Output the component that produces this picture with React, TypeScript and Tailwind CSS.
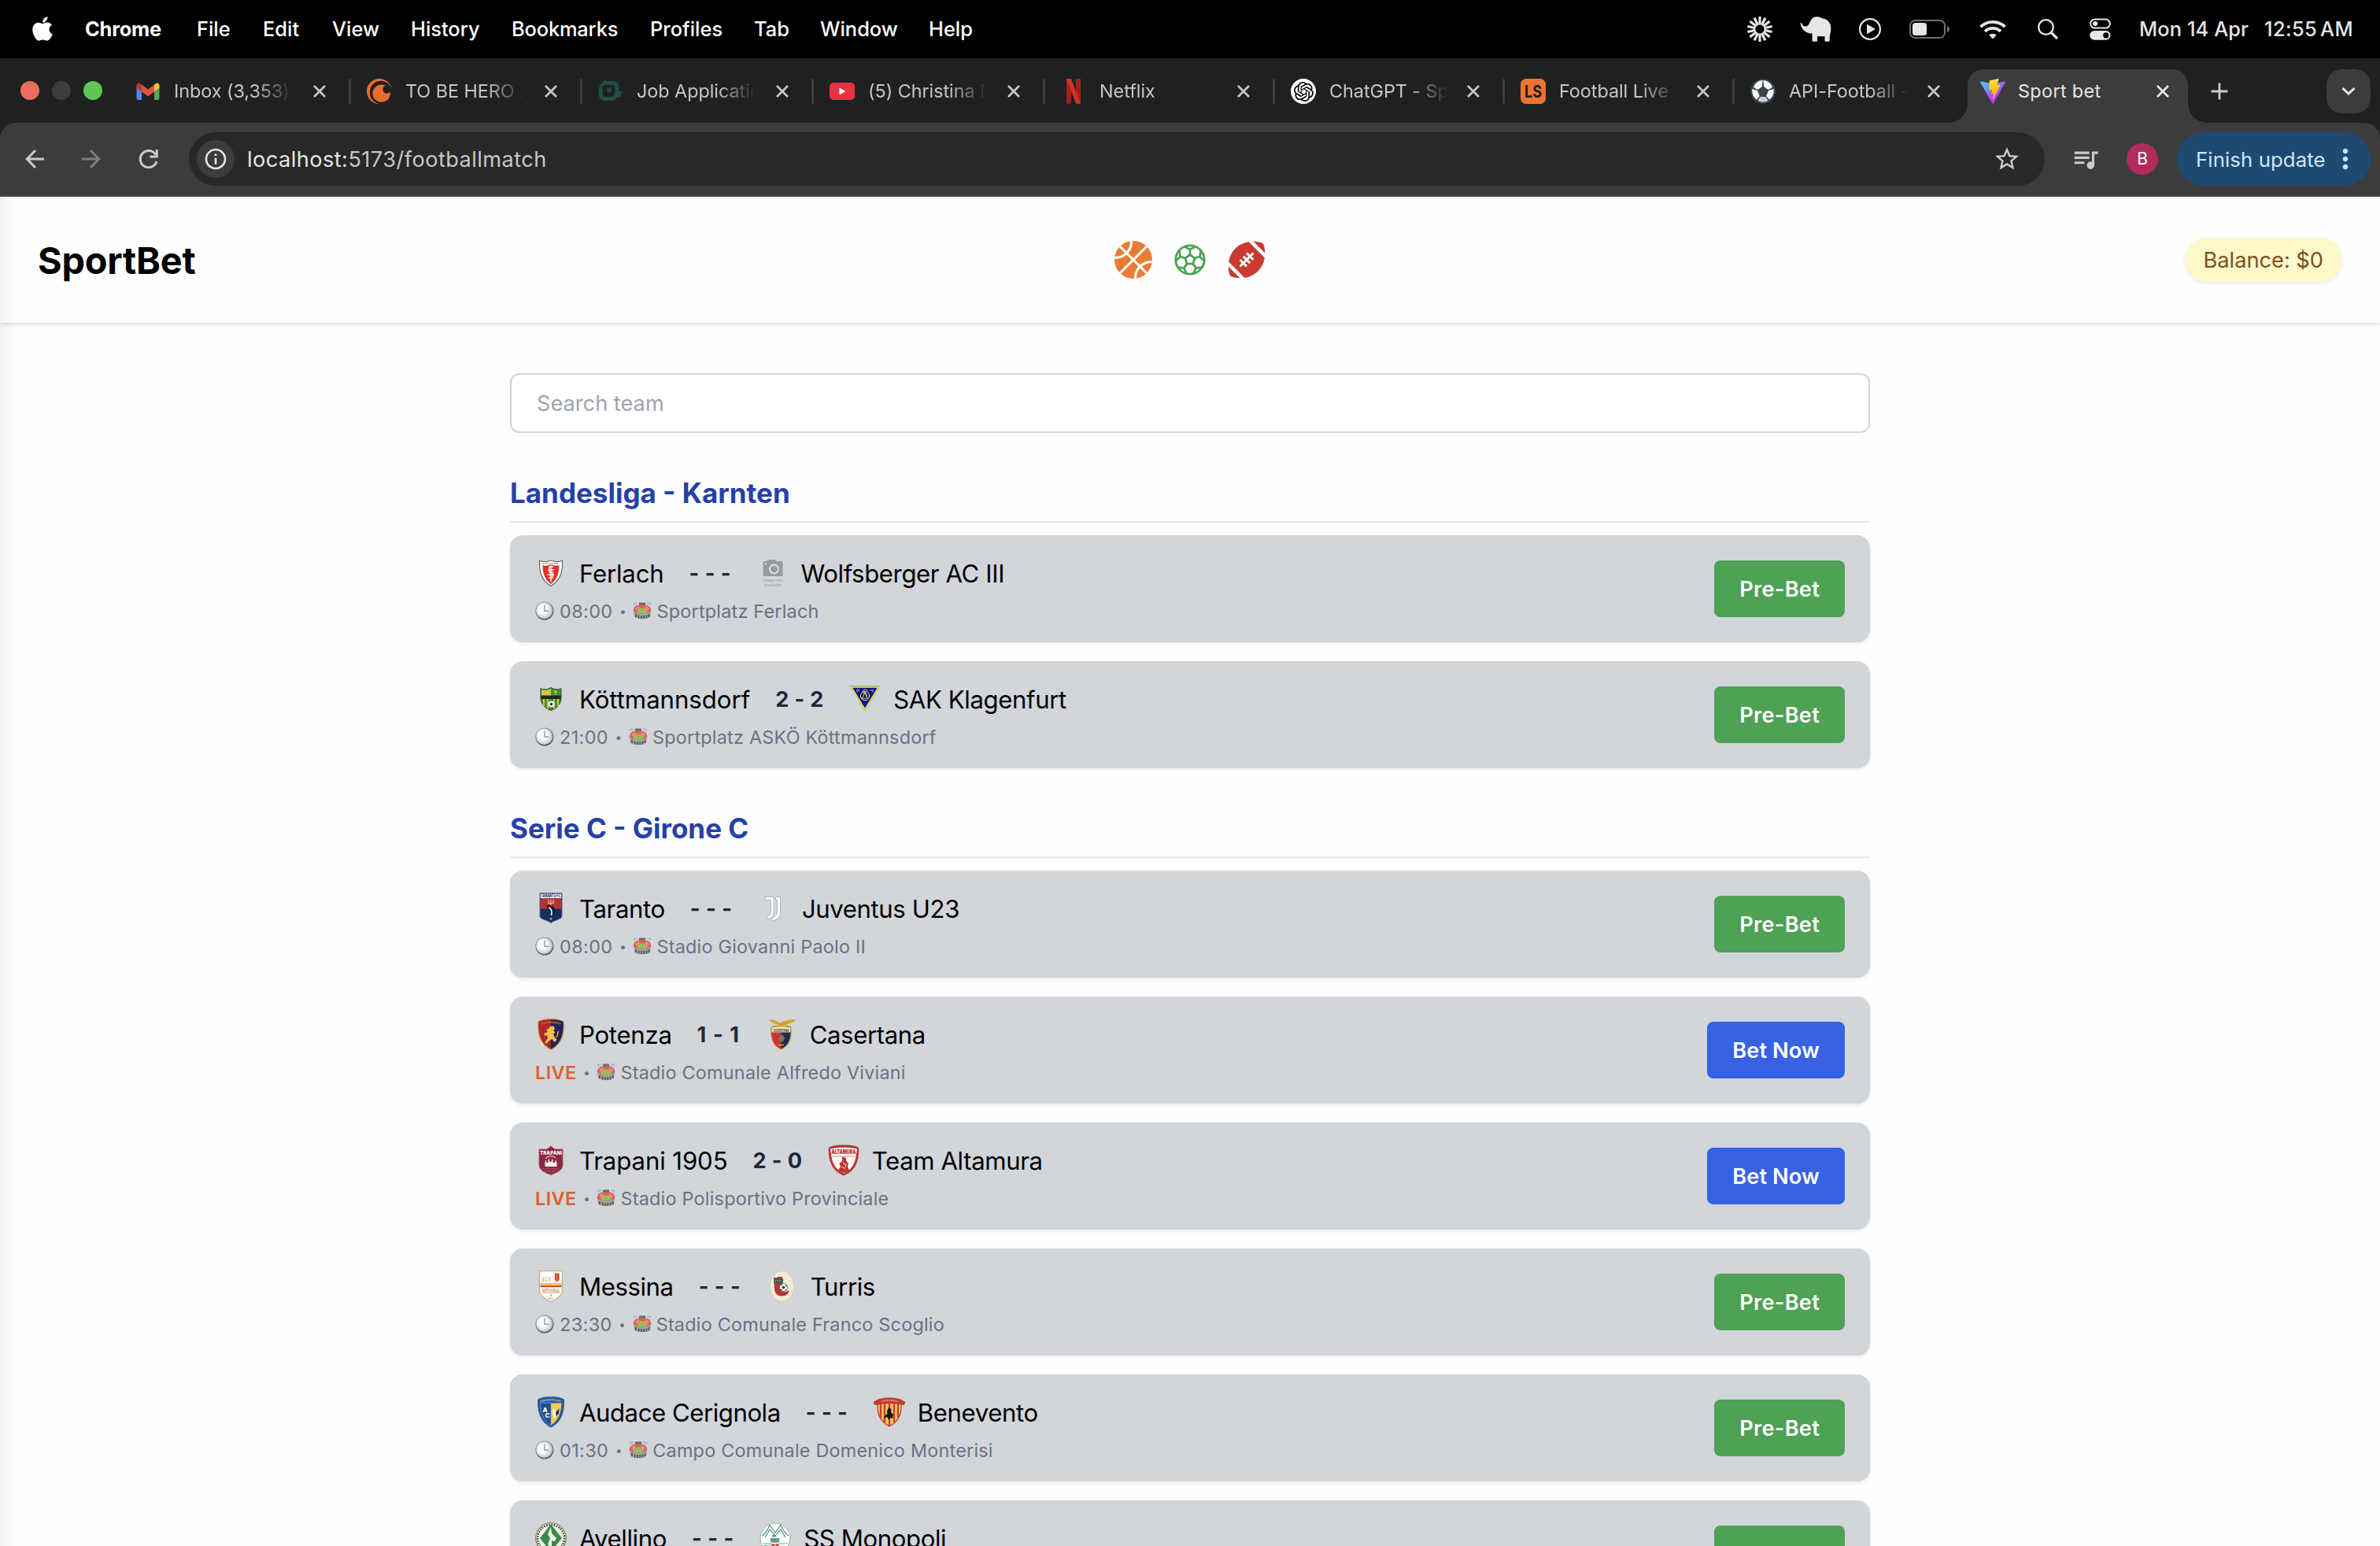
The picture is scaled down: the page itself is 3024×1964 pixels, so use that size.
import type { ReactNode } from "react";
import { FaApple, FaFootballBall } from "react-icons/fa";
import { SiCrunchyroll, SiOpenai } from "react-icons/si";
import { MdInfoOutline, MdMoreVert, MdQueueMusic, MdStarBorder } from "react-icons/md";

/* ---------- macOS menu bar ---------- */

const menuItems = [
  { label: "Chrome", cls: "w-[142px] font-bold tracking-[-0.2px]" },
  { label: "File", cls: "w-[84px]" },
  { label: "Edit", cls: "w-[88px]" },
  { label: "View", cls: "w-[100px]" },
  { label: "History", cls: "w-[128px]" },
  { label: "Bookmarks", cls: "w-[176px] tracking-[-0.15px]" },
  { label: "Profiles", cls: "w-[132px]" },
  { label: "Tab", cls: "w-[84px]" },
  { label: "Window", cls: "w-[138px]" },
  { label: "Help", cls: "w-[80px]" },
];

function Starburst() {
  return (
    <svg className="h-8 w-8" viewBox="0 0 32 32" stroke="#e6e6e6" strokeWidth="3.2">
      {Array.from({ length: 14 }, (_, i) => (
        <line key={i} x1="16" y1="0" x2="16" y2="10.5" transform={`rotate(${(i * 360) / 14} 16 16)`} />
      ))}
    </svg>
  );
}

function MenuBar() {
  return (
    <div className="flex h-[74px] items-center bg-black pl-[41px] text-[25.4px] font-medium text-white">
      <FaApple className="mr-[41px] h-[35px] w-[26px] shrink-0 -translate-y-px" />
      {menuItems.map((m) => (
        <div key={m.label} className={"shrink-0 whitespace-nowrap " + m.cls}>
          {m.label}
        </div>
      ))}
      <div className="ml-auto flex items-center pr-[32px] text-[#e6e6e6]">
        <Starburst />
        <svg className="ml-[35px] h-8 w-10" viewBox="0 0 40 32" fill="#e6e6e6">
          <path d="M0.6 8.2C1.5 7.6 2.6 8.3 2.8 9.6C3.3 12 5.5 12.6 7.6 12.4C10.5 12.1 11.5 9.5 13 6.5C14.5 3 17 0.3 21.5 0.3C25 0.3 27 1.5 28.5 2.6C34.5 3 39 7.5 39.3 14C39.5 19 38.7 20.5 38 24L37.6 30.5C37.5 31.5 37 31.8 36.3 31.8H32.8C32 31.8 31.5 31.3 31.5 30.5V25.3H22V30.5C22 31.3 21.5 31.8 20.7 31.8H17C16.2 31.8 15.7 31.3 15.6 30.5L15.5 21.5C12.5 21.5 9 21 6 18.5C3 16 1 12.5 0.6 8.2Z" />
        </svg>
        <svg className="ml-[35px] h-7 w-7" viewBox="0 0 28 28">
          <circle cx="14" cy="14" r="12.9" fill="none" stroke="#e6e6e6" strokeWidth="2.2" />
          <path d="M10 8.8V19.2C10 19.9 10.6 20.1 11.1 19.8L19.8 14.7C20.4 14.3 20.4 13.7 19.8 13.3L11.1 8.2C10.6 7.9 10 8.2 10 8.8Z" fill="#e6e6e6" />
        </svg>
        <svg className="ml-[36px] h-6 w-[51px]" viewBox="0 0 51 24">
          <rect x="1" y="1" width="44" height="22" rx="6.5" fill="none" stroke="#6f6f6f" strokeWidth="2" />
          <rect x="4" y="4" width="18" height="16" rx="3.5" fill="#e6e6e6" />
          <path d="M48 8C50 9 51 10.4 51 12C51 13.6 50 15 48 16Z" fill="#6f6f6f" />
        </svg>
        <svg className="ml-[38px] h-[26px] w-[34px]" viewBox="0 0 34 26" fill="none" stroke="#e6e6e6" strokeWidth="3.8">
          <path d="M1.5 10.2A22 22 0 0 1 32.5 10.2" />
          <path d="M7 15.9A14.5 14.5 0 0 1 27 15.9" />
          <path d="M17 25.5L12.3 20.6A6.8 6.8 0 0 1 21.7 20.6Z" fill="#e6e6e6" stroke="none" />
        </svg>
        <svg className="ml-[40px] h-[26px] w-[26px]" viewBox="0 0 26 26" fill="none" stroke="#e6e6e6">
          <circle cx="10.5" cy="10.5" r="9.3" strokeWidth="2.3" />
          <path d="M17.3 17.3L24 24" strokeWidth="3.2" strokeLinecap="round" />
        </svg>
        <svg className="ml-[40px] h-7 w-[27px]" viewBox="0 0 27 28">
          <rect x="1.1" y="1.6" width="24.8" height="11" rx="5.5" fill="none" stroke="#e6e6e6" strokeWidth="2" />
          <circle cx="7.2" cy="7.1" r="3" fill="#e6e6e6" />
          <rect x="0.2" y="16" width="26.4" height="11.8" rx="5.9" fill="#e6e6e6" />
          <circle cx="20.8" cy="21.9" r="3.6" fill="#000" />
        </svg>
        <div className="ml-[36px] w-[159px] whitespace-nowrap tracking-[0.1px]">Mon 14 Apr</div>
        <div className="w-[115px] whitespace-nowrap tracking-[0.35px]">
          12:55<span className="ml-[4px]">AM</span>
        </div>
      </div>
    </div>
  );
}

/* ---------- Tab strip ---------- */

function CloseX({ className }: { className: string }) {
  return (
    <svg className={"h-4 w-4 shrink-0 " + className} viewBox="0 0 16 16" stroke="currentColor" strokeWidth="2.8">
      <path d="M1 1L15 15M15 1L1 15" />
    </svg>
  );
}

const Gmail = () => (
  <svg className="h-8 w-8" viewBox="0 0 32 32">
    <path d="M1.5 9V25C1.5 26 2.3 27 3.5 27H8V13Z" fill="#4f86ee" />
    <path d="M30.5 9V25C30.5 26 29.7 27 28.5 27H24V13Z" fill="#53a65a" />
    <path d="M24 7.5L26 6C28 4.5 30.5 6 30.5 8.5V11.5L24 16.5Z" fill="#f2bd42" />
    <path d="M8 7.5L6 6C4 4.5 1.5 6 1.5 8.5V11.5L8 16.5Z" fill="#b9362c" />
    <path d="M8 7.5L16 13.5L24 7.5V16.5L16 22.5L8 16.5Z" fill="#dd5144" />
  </svg>
);

const JobIcon = () => (
  <svg className="h-8 w-8" viewBox="0 0 32 32" fill="none" stroke="#1f4d49" strokeWidth="5">
    <path d="M7 5.5H19C22 5.5 24 7.5 24 11V17C24 21 21.5 24.5 17 25.5H9C5 25.5 3 22.5 3 19V11" />
    <path d="M2.5 10L11 3" strokeWidth="4" />
    <circle cx="14" cy="14.5" r="3" fill="#1f4d49" stroke="none" />
    <path d="M22 15L32 17L28 19.5L30 23H20Z" fill="#1f4d49" stroke="none" />
  </svg>
);

const YouTube = () => (
  <svg className="h-8 w-8" viewBox="0 0 32 32">
    <rect x="0" y="5" width="32" height="22" rx="5" fill="#ea3340" />
    <path d="M12.5 11.5L20.5 16L12.5 20.5Z" fill="#fff" />
  </svg>
);

const NetflixN = () => (
  <svg className="h-8 w-8" viewBox="0 0 32 32">
    <path d="M7 0H13V31.5L7 32Z" fill="#a3201c" />
    <path d="M19 0H25V32L19 31.5Z" fill="#a3201c" />
    <path d="M7 0H13L25 32L19 31.3Z" fill="#d3302a" />
  </svg>
);

const ChatGPT = () => (
  <div className="flex h-8 w-8 items-center justify-center rounded-full bg-white text-black">
    <SiOpenai className="h-[25px] w-[25px]" />
  </div>
);

const LiveScore = () => (
  <svg className="h-8 w-8" viewBox="0 0 32 32">
    <rect width="32" height="32" rx="7" fill="#ed742e" />
    <text x="16" y="24" textAnchor="middle" fontFamily="Inter, sans-serif" fontSize="22" fontWeight="700" fill="#1c1c1c" textLength="22" lengthAdjust="spacingAndGlyphs">
      LS
    </text>
  </svg>
);

const ApiBall = () => (
  <svg className="h-8 w-8" viewBox="0 0 32 32">
    <circle cx="16" cy="16" r="15.8" fill="#39434b" />
    <path d="M15.5 2L14.8 10L9.5 14L4 11C6 5.5 10 2.5 15.5 2Z" fill="#fff" />
    <path d="M16.5 2L17.2 10L22.5 14L28 11C26 5.5 22 2.5 16.5 2Z" fill="#fff" />
    <path d="M2.5 13L9 15L11.8 22L8 26.5C3.5 23.5 1.5 18 2.5 13Z" fill="#f6f6f6" />
    <path d="M29.5 13L23 15L20.2 22L24 26.5C28.5 23.5 30.5 18 29.5 13Z" fill="#f6f6f6" />
    <path d="M12.5 23H19.5L22.5 27.5C19 30.5 13 30.5 9.5 27.5Z" fill="#c3ced6" />
  </svg>
);

const ViteLogo = () => (
  <svg className="h-8 w-8" viewBox="0 0 256 257">
    <defs>
      <linearGradient id="viteA" x1="-.828%" x2="57.636%" y1="7.652%" y2="78.411%">
        <stop offset="0%" stopColor="#41D1FF" />
        <stop offset="100%" stopColor="#BD34FE" />
      </linearGradient>
      <linearGradient id="viteB" x1="43.376%" x2="50.316%" y1="2.242%" y2="89.03%">
        <stop offset="0%" stopColor="#FFEA83" />
        <stop offset="8.333%" stopColor="#FFDD35" />
        <stop offset="100%" stopColor="#FFA800" />
      </linearGradient>
    </defs>
    <path fill="url(#viteA)" d="M255.153 37.938L134.897 252.976c-2.483 4.440-8.862 4.466-11.382.048L.875 37.958c-2.746-4.814 1.371-10.646 6.827-9.670l120.385 21.517a6.537 6.537 0 0 0 2.322-.004l117.867-21.483c5.438-.991 9.574 4.796 6.877 9.620Z" />
    <path fill="url(#viteB)" d="M185.432.063L96.440 17.501a3.268 3.268 0 0 0-2.634 3.014l-5.474 92.456a3.268 3.268 0 0 0 3.997 3.378l24.777-5.718c2.318-.535 4.413 1.507 3.936 3.838l-7.361 36.047c-.495 2.426 1.782 4.500 4.151 3.780l15.304-4.649c2.372-.720 4.652 1.360 4.150 3.788l-11.698 56.621c-.732 3.542 3.979 5.473 5.943 2.437l1.313-2.028l72.516-144.720c1.215-2.423-.880-5.186-3.540-4.672l-25.505 4.922c-2.396.462-4.435-1.770-3.759-4.114l16.646-57.705c.677-2.350-1.370-4.583-3.769-4.113Z" />
  </svg>
);

const tabs: { title: string; icon: ReactNode; width: string }[] = [
  { title: "Inbox (3,353)", icon: <Gmail />, width: "w-[294px]" },
  { title: "TO BE HERO X", icon: <SiCrunchyroll className="h-8 w-8 text-[#ea6c2d]" />, width: "w-[294px]" },
  { title: "Job Application", icon: <JobIcon />, width: "w-[294px]" },
  { title: "(5) Christina P", icon: <YouTube />, width: "w-[294px]" },
  { title: "Netflix", icon: <NetflixN />, width: "w-[292px]" },
  { title: "ChatGPT - Sp", icon: <ChatGPT />, width: "w-[292px]" },
  { title: "Football Live", icon: <LiveScore />, width: "w-[292px]" },
  { title: "API-Football -", icon: <ApiBall />, width: "w-[293px]" },
];

function TabStrip() {
  return (
    <div className="flex h-[82px] bg-[#1f2120] text-[23.4px]">
      <div className="flex w-[150px] shrink-0 gap-4 pl-[26px] pt-[29px]">
        <span className="h-6 w-6 rounded-full bg-[#ec6a5e]" />
        <span className="h-6 w-6 rounded-full bg-[#3c3e3d]" />
        <span className="h-6 w-6 rounded-full bg-[#61c554]" />
      </div>
      {tabs.map((t, i) => (
        <div key={t.title} className={"flex h-[84px] shrink-0 items-center text-[#c4c6c5] " + t.width}>
          <div className="ml-[22px] h-8 w-8 shrink-0">{t.icon}</div>
          <div className="ml-[17px] w-[151px] shrink-0 whitespace-nowrap tracking-[-0.05px] [mask-image:linear-gradient(to_right,black_68%,transparent_100%)]">
            {t.title}
          </div>
          <CloseX className="ml-auto mr-[29px]" />
          <span
            className={
              i < tabs.length - 1
                ? "-mr-[2px] h-8 w-[3px] shrink-0 rounded-full bg-[#3d3f3e]"
                : "-mr-[2px] h-8 w-[3px] shrink-0"
            }
          />
        </div>
      ))}
      <div className="relative ml-[5px] mt-[14px] flex h-[68px] w-[280px] shrink-0 items-center rounded-t-[20px] bg-[#3c3c3c] pb-3 text-[#e6e6e6]">
        <span className="absolute -left-6 bottom-0 h-6 w-6 bg-[radial-gradient(circle_at_0_0,transparent_23.5px,#3c3c3c_24px)]" />
        <span className="absolute -right-6 bottom-0 h-6 w-6 bg-[radial-gradient(circle_at_100%_0,transparent_23.5px,#3c3c3c_24px)]" />
        <div className="ml-4 h-8 w-8 shrink-0">
          <ViteLogo />
        </div>
        <div className="ml-4 whitespace-nowrap tracking-[0.35px]">Sport bet</div>
        <CloseX className="ml-auto mr-6" />
      </div>
      <svg className="ml-[29px] mt-[31px] h-[22px] w-[22px] shrink-0" viewBox="0 0 22 22" stroke="#c9cac9" strokeWidth="2.8">
        <path d="M11 0.5V21.5M0.5 11H21.5" />
      </svg>
      <div className="ml-auto mr-3 mt-[14px] flex h-14 w-14 shrink-0 items-center justify-center rounded-[20px] bg-[#3c3c3c]">
        <svg className="h-[10px] w-[18px]" viewBox="0 0 18 10" fill="none" stroke="#e6e6e6" strokeWidth="3">
          <path d="M1.5 1L9 8L16.5 1" />
        </svg>
      </div>
    </div>
  );
}

/* ---------- Toolbar ---------- */

function Toolbar() {
  return (
    <div className="bg-[#1f2120]">
      <div className="flex h-[94px] items-center rounded-t-[20px] border-b-2 border-[#4a4849] bg-[#3c3c3c] pl-[32px]">
        <svg className="h-6 w-6 shrink-0" viewBox="0 0 24 24" fill="none" stroke="#c9c9c9" strokeWidth="3">
          <path d="M13 1L2.3 12L13 23M2.3 12H24" />
        </svg>
        <svg className="ml-12 h-6 w-6 shrink-0" viewBox="0 0 24 24" fill="none" stroke="#7d7d7d" strokeWidth="3">
          <path d="M11 1L21.7 12L11 23M21.7 12H0" />
        </svg>
        <svg className="ml-12 h-6 w-[25px] shrink-0" viewBox="0 0 25 24" fill="none" stroke="#c9c9c9" strokeWidth="3">
          <path d="M23 15A10.6 10.6 0 1 1 22 6.8" />
          <path d="M23.3 0V9H14.5" />
        </svg>
        <div className="ml-[39px] flex h-[68px] w-[2358px] shrink-0 items-center rounded-full bg-[#282828] pl-[10px]">
          <div className="flex h-12 w-12 items-center justify-center rounded-full bg-[#3c3c3c]">
            <MdInfoOutline className="h-8 w-8 text-[#e3e3e3]" />
          </div>
          <div className="ml-[16px] whitespace-nowrap pt-[2px] text-[27.2px] tracking-[0.44px] text-[#c7c7c7]">
            <span className="text-[#e6e6e6]">localhost:</span>5173/footballmatch
          </div>
          <MdStarBorder className="ml-auto mr-[30px] h-9 w-9 text-[#c9c9c9]" />
        </div>
        <MdQueueMusic className="ml-[33px] h-[38px] w-[38px] shrink-0 text-[#c9c9c9]" />
        <div className="ml-[33px] flex h-10 w-10 shrink-0 items-center justify-center rounded-full bg-[#b02c5c] text-[21px] text-white">B</div>
        <div className="ml-6 flex h-[68px] w-[246px] shrink-0 items-center rounded-full bg-[#1f4972] pl-[24px] text-[25.8px] text-[#cbe6fb]">
          <div className="w-[170px] whitespace-nowrap pt-[2px] tracking-[0.08px]">Finish update</div>
          <MdMoreVert className="h-[40px] w-[40px] shrink-0" />
        </div>
      </div>
    </div>
  );
}

/* ---------- Sport icons ---------- */

const BasketballIcon = () => (
  <svg className="h-12 w-12" viewBox="0 0 48 48">
    <defs>
      <clipPath id="ballClip">
        <circle cx="24" cy="24" r="24" />
      </clipPath>
    </defs>
    <g clipPath="url(#ballClip)">
      <rect width="48" height="48" fill="#e97c35" />
      <g fill="none" stroke="#fefefe" strokeWidth="3.1">
        <path d="M5 5L43 43M43 5L5 43" />
        <circle cx="1" cy="0.8" r="20.6" />
        <circle cx="47" cy="47.2" r="20.6" />
      </g>
    </g>
  </svg>
);

const SoccerIcon = () => (
  <svg className="h-12 w-12" viewBox="0 0 48 48" fill="none" stroke="#4ea155" strokeWidth="2.8">
    <circle cx="24" cy="24" r="18.2" />
    <path d="M24 17.6L30.1 22L27.8 29.2H20.2L17.9 22Z" />
    {[0, 72, 144, 216, 288].map((a) => (
      <path key={a} d="M24 17.6V10.8M16.8 7.3L24 10.8L31.2 7.3" transform={`rotate(${a} 24 24)`} />
    ))}
  </svg>
);

/* ---------- Club crests ---------- */

function Crest({ children }: { children: ReactNode }) {
  return (
    <svg className="h-10 w-10 shrink-0" viewBox="0 0 40 40" fontFamily="Inter, sans-serif">
      {children}
    </svg>
  );
}

const Ferlach = () => (
  <Crest>
    <path d="M5.5 4C10 6.5 15 6 20 4C25 6 30 6.5 34.5 4C35 17 33 29 20 36.5C7 29 5 17 5.5 4Z" fill="#fff" stroke="#666" strokeWidth="1.2" />
    <path d="M9.5 10C14 11.5 17 10 20 9C23 10 26 11.5 30.5 10C30.5 20 28 28 20 34C12 28 9.5 20 9.5 10Z" fill="#e0342b" />
    <path d="M23 12H18V19H22V26H17M16 16H24M15.5 22H24M20 10V31" fill="none" stroke="#fff" strokeWidth="1.4" />
    <path d="M10 7.5H30" stroke="#555" strokeWidth="1.2" strokeDasharray="1 1" />
  </Crest>
);
const NoImage = () => (
  <Crest>
    <path d="M9.5 5H12.5V3.8H15L17 3H23L25 5H31C32 5 32.6 5.6 32.6 6.5V22.5C32.6 23.5 32 24 31 24H9C8 24 7.6 23.5 7.6 22.5V6.5C7.6 5.6 8.3 5 9.5 5Z" fill="#989b9e" />
    <circle cx="21.5" cy="15" r="5.5" fill="#989b9e" stroke="#e4e6e8" strokeWidth="1.8" />
    <circle cx="11" cy="8.3" r="1.1" fill="#e4e6e8" />
    <text x="20" y="31" fontSize="5.2" textAnchor="middle" fill="#a0a3a7">image not</text>
    <text x="20" y="37" fontSize="5.2" textAnchor="middle" fill="#a0a3a7">available</text>
  </Crest>
);
const Kottmannsdorf = () => (
  <Crest>
    <path d="M7 6.5C11 8.5 16 8 20 5.5C24 8 29 8.5 33 6.5C33.5 9 32.5 11 33 14C34 24 30 31 20 34.5C10 31 6 24 7 14C7.5 11 6.5 9 7 6.5Z" fill="#3f8f3a" stroke="#3c4a2a" strokeWidth="1" />
    <path d="M8 8C12 9 16 9 20 7V16H8Z" fill="#d9c63c" />
    <path d="M11 20V29M16 20V32M24 20V32M29 20V29" stroke="#d9c63c" strokeWidth="2" />
    <rect x="7.5" y="15.5" width="25" height="4.5" fill="#1e2a1a" />
    <path d="M24 9L26 12L28 9M26 12V15" stroke="#d9c63c" strokeWidth="1.3" fill="none" />
    <circle cx="20.5" cy="26.5" r="4" fill="#eee" />
    <circle cx="20.5" cy="26.5" r="1.7" fill="#222" />
  </Crest>
);
const Sak = () => (
  <Crest>
    <path d="M0.5 3.2H39.5L20 35.6Z" fill="#8b8d6a" />
    <path d="M2.6 4.8H37.4L20 33.2Z" fill="#14148c" stroke="#e5e04e" strokeWidth="1.8" />
    <circle cx="20" cy="16" r="5.6" fill="none" stroke="#e5e04e" strokeWidth="1" />
    <path d="M23.5 9.5C21 7 16.5 8 17.5 11S23.5 13 22.5 16.5S16 21 14.5 18M16.5 20L20 11L23.5 20" fill="none" stroke="#e5e04e" strokeWidth="1" />
    <path d="M10 8V11M30 8V11M12 8V10M28 8V10" stroke="#e5e04e" strokeWidth="1" />
  </Crest>
);
const Taranto = () => (
  <Crest>
    <path d="M6 0.5H34V30C34 34 24 35 20 38.5C16 35 6 34 6 30Z" fill="#172f5c" stroke="#5d6f92" strokeWidth="1" />
    <rect x="6.8" y="1" width="26.4" height="6" fill="#f0f1f4" />
    <path d="M7 7H33V20.5H7Z" fill="#b8352f" />
    <text x="20" y="6.2" fontSize="5.5" fontWeight="700" textAnchor="middle" fill="#172f5c" textLength="25" lengthAdjust="spacingAndGlyphs">TARANTO FC</text>
    <path d="M17 9V13.5H23V9M20 9V18" fill="none" stroke="#e7b9b5" strokeWidth="1.2" />
    <path d="M14 17C18 14 25 17 25 22C25 26 22 27 21 30C20 26 19 23 16 21Z" fill="#0f1c38" />
    <path d="M17 19C20 20 22 23 20.5 29" fill="none" stroke="#fff" strokeWidth="1.6" />
    <circle cx="20" cy="33" r="1.6" fill="#8a9dc0" />
  </Crest>
);
const Juventus = () => (
  <Crest>
    <path d="M9 5.5H20V24C20 29 17 32 12.5 33.5L11.5 30.5C15 29 16.5 27 16.5 23V9H9Z" fill="#fff" stroke="#a5a7aa" strokeWidth="0.8" />
    <path d="M22.5 5.5H28.5V24C28.5 30.5 25 34.5 18.5 36L17.5 33C22 31 24.5 28.5 24.5 23V9H22.5Z" fill="#fff" stroke="#a5a7aa" strokeWidth="0.8" />
  </Crest>
);
const Potenza = () => (
  <Crest>
    <path d="M20 0.5C27 0.5 32 1.5 36 3.5C37.5 20 33 33 20 39.5C7 33 2.5 20 4 3.5C8 1.5 13 0.5 20 0.5Z" fill="#b2232b" />
    <path d="M20 0.5C27 0.5 32 1.5 36 3.5C37.5 20 33 33 20 39.5Z" fill="#23215e" />
    <path d="M20 0.5C27 0.5 32 1.5 36 3.5C37.5 20 33 33 20 39.5C7 33 2.5 20 4 3.5C8 1.5 13 0.5 20 0.5Z" fill="none" stroke="#d9a23c" strokeWidth="1.2" />
    <path d="M8 6.5C15 4 25 4 32 6.5" fill="none" stroke="#c9683a" strokeWidth="2.5" strokeDasharray="1.5 0.8" />
    <path d="M19 10L23.5 9.5L25 13L23 15L25.5 17.5L23 19.5L25 24L27.5 27L24.5 30L21.5 26L18 28L14 32L12.5 29.5L16 25L15 21L11.5 22L12 18.5L16 17L14 14.5L17 13Z" fill="#f2c14c" />
    <path d="M26.5 24C30 22 27 19 30 16" fill="none" stroke="#f2c14c" strokeWidth="1.3" />
  </Crest>
);
const Casertana = () => (
  <Crest>
    <path d="M7 11C9 9 14 9 19.5 9.5C25 9 30 9 32 11C33 24 31 34 19.5 39.2C8 34 6 24 7 11Z" fill="#1d2a55" stroke="#d7a63e" strokeWidth="1.3" />
    <path d="M7.6 17.5H19.5V38.5C10 34 7.5 27 7.6 17.5Z" fill="#cf3531" />
    <path d="M7.5 11.5C14 9.5 25 9.5 31.5 11.5V17.5H7.5Z" fill="#efe3ae" />
    <text x="19.5" y="16.8" fontSize="5" fontWeight="700" textAnchor="middle" fill="#444" textLength="20" lengthAdjust="spacingAndGlyphs">CASERTANA</text>
    <circle cx="19.5" cy="25" r="4.5" fill="#8d6d5b" stroke="#55433a" strokeWidth="0.8" />
    <path d="M4 1.5C10 1 14 3 18 5.5C24 2 31 1 38 1.2C36 4.5 31 6 26 8L22 10.5H12L17 8C11 7 7 5 4 1.5Z" fill="#cfa22f" />
    <path d="M16 33.5H23" stroke="#d7a63e" strokeWidth="1.5" />
  </Crest>
);
const Trapani = () => (
  <Crest>
    <path d="M20 2L25 6H35V26C35 33 27 36 20 38.5C13 36 5 33 5 26V6H15Z" fill="#8b2742" stroke="#a8536a" strokeWidth="0.8" />
    <text x="20" y="12.5" fontSize="6.5" fontWeight="800" textAnchor="middle" fill="#fff" textLength="28" lengthAdjust="spacingAndGlyphs">TRAPANI</text>
    <path d="M13 18C16 14 22 13.5 26 17" fill="none" stroke="#e6c9d1" strokeWidth="1.1" />
    <path d="M12.5 28V23L13.5 19L14.5 23H16.5V20L17.5 17.5L18.5 22H20.5L21.5 17.5L22.5 20V23H25L26 19L27.5 23V28Z" fill="#f7eef1" />
    <path d="M9 31H31M12 34H28" stroke="#b0637a" strokeWidth="1.2" strokeDasharray="2 1" />
  </Crest>
);
const Altamura = () => (
  <Crest>
    <path d="M0.8 4C7 0.5 14 0.5 20 0.5C26 0.5 33 0.5 39.2 4C39.5 20 36 33 20 39.5C4 33 0.5 20 0.8 4Z" fill="#b8342f" />
    <path d="M3.8 9H36.2C35.5 22 32 31 20 36.5C8 31 4.5 22 3.8 9Z" fill="#fbf7f6" />
    <path d="M3 5.5C13 3 27 3 37 5.5L36.3 11H3.7Z" fill="#fbf7f6" />
    <text x="20" y="11.5" fontSize="8" fontWeight="900" textAnchor="middle" fill="#b8342f" textLength="31" lengthAdjust="spacingAndGlyphs">ALTAMURA</text>
    <path d="M5 15H35" stroke="#e0a29f" strokeWidth="1.2" />
    <path d="M18 15.5L23 17V21L26 23.5L25 28L27 33L20 36L13 33L16 28L14.5 24L18 21Z" fill="#b8342f" />
    <path d="M19 22L21 26M17 28L22 31M23 24L22 29" stroke="#f3d8d6" strokeWidth="1" />
  </Crest>
);
const Messina = () => (
  <Crest>
    <path d="M5.5 0.6H34.5V24C34.5 32 28 36 20 39.5C12 36 5.5 32 5.5 24Z" fill="#fdfbf6" stroke="#c8b689" strokeWidth="1.3" />
    <text x="14.5" y="13.5" fontSize="8" fontWeight="700" textAnchor="middle" fill="#c9b98e" textLength="12" lengthAdjust="spacingAndGlyphs">A.C.R.</text>
    <path d="M25 3.5H30.5V12L27.8 15L25 12Z" fill="#c8402f" />
    <path d="M27.8 3.5V14" stroke="#e7b43a" strokeWidth="1" />
    <rect x="6.5" y="16" width="27" height="2.2" fill="#ecc54b" />
    <rect x="6.5" y="18.8" width="27" height="2.4" fill="#cf4a34" />
    <text x="20" y="29" fontSize="8" fontWeight="700" textAnchor="middle" fill="#c2ae7c" textLength="22" lengthAdjust="spacingAndGlyphs">MESSINA</text>
    <circle cx="20" cy="31.5" r="1.3" fill="#c2ae7c" />
    <path d="M17 35.5H23" stroke="#c2ae7c" strokeWidth="1.8" strokeDasharray="2.2 1" />
  </Crest>
);
const Turris = () => (
  <Crest>
    <ellipse cx="19.5" cy="20" rx="15" ry="19.5" fill="#f1ebde" stroke="#d9cba8" strokeWidth="1" />
    <path d="M9 9H14V8H20V25C21 28 24 28 28 25C29 29 25 32.5 19 32.5C13 32.5 10 28 10 23Z" fill="#b7352f" />
    <path d="M9.5 10H21V16H9.5Z" fill="#33634a" />
    <path d="M11 13H19" stroke="#a9c0b1" strokeWidth="1" strokeDasharray="1.5 1" />
    <circle cx="21.5" cy="21.5" r="5" fill="#fff" stroke="#555" strokeWidth="0.8" />
    <circle cx="21.5" cy="21.5" r="1.8" fill="#333" />
    <path d="M18 17.5L19.5 19M25.5 18.5L24 20M18 25L19.5 23.8M25 25L23.8 23.8" stroke="#333" strokeWidth="1.2" />
  </Crest>
);
const Audace = () => (
  <Crest>
    <path d="M3 4C8 0.5 14 0.3 20 0.3C26 0.3 32 0.5 37 4C37.5 21 33 33 20 39.7C7 33 2.5 21 3 4Z" fill="#2c5a9f" />
    <path d="M20 8.5H33.5C33 20 30 30 20 36.5Z" fill="#f2cf4a" />
    <path d="M20 8.5H6.5C7 20 10 30 20 36.5Z" fill="#1f4a8f" stroke="#7d9cc8" strokeWidth="0.7" />
    <path d="M7 6.5C14 3.5 26 3.5 33 6.5" fill="none" stroke="#9db6d8" strokeWidth="2" strokeDasharray="1.6 0.8" />
    <text x="12.5" y="20" fontSize="8" fontWeight="800" textAnchor="middle" fill="#fff">A</text>
    <text x="15.5" y="27" fontSize="8" fontWeight="800" textAnchor="middle" fill="#fff">C</text>
    <path d="M21.5 17L24 15.5L26 20L30 15.5L29.5 21L26 25L24.5 29L23.5 24Z" fill="#fff" />
    <path d="M26 20L30.5 15L30 22L26.5 25Z" fill="#26375a" />
  </Crest>
);
const Benevento = () => (
  <Crest>
    <path d="M5 8H35C36 22 32 32 20 38C8 32 4 22 5 8Z" fill="#f3c95a" stroke="#b8352f" strokeWidth="1.2" />
    <path d="M9 9V27M14 9V33M20 9V37M26 9V33M31 9V27" stroke="#cc3d35" strokeWidth="2.4" />
    <path d="M0 7C3 6 6 3 10 3C14 1.5 26 1.5 30 3C34 3 37 6 40 7L38.5 10.5L34 10C28 8 12 8 6 10L1.5 10.5Z" fill="#cb3a32" stroke="#8e2620" strokeWidth="0.6" />
    <path d="M10 6.5C15 4.5 25 4.5 30 6.5" fill="none" stroke="#e9a59e" strokeWidth="1.7" strokeDasharray="1.6 0.8" />
    <path d="M19.5 14L22.5 16L22 20L25 23L24 28L21 27L20 30L17 26L12.5 28L15 24L17.5 22L17 18Z" fill="#15110f" />
  </Crest>
);
const Avellino = () => (
  <Crest>
    <circle cx="20" cy="20" r="19.3" fill="#f3f4f0" stroke="#8f8350" strokeWidth="1.3" />
    <circle cx="20" cy="20" r="17" fill="none" stroke="#4b5148" strokeWidth="2.6" strokeDasharray="1.8 1.4" />
    <circle cx="20" cy="20" r="15" fill="#e8efe6" />
    <path d="M20 2.5L34 20L20 37.5L6 20Z" fill="#3c8a45" />
    <path d="M20 6L21 14L27 20L25 24L21 23V33L16 28L19 20L16 15Z" fill="#f3f6f1" />
  </Crest>
);
const Monopoli = () => (
  <Crest>
    <circle cx="20" cy="20" r="19" fill="#fbfdfc" stroke="#8fb9a5" strokeWidth="1" />
    <path d="M3 17C7 15 10 10 13 3.5L20 13L27 3.5C30 10 33 15 37 17M7 19L13 9L20 17L27 9L33 19" fill="none" stroke="#3f8f6c" strokeWidth="1.1" />
    <path d="M14 20H25V25C25 26 14 26 14 25Z" fill="#5aa283" />
    <path d="M15 18.5L18 15L22 18.5Z" fill="#5aa283" />
    <path d="M4 27H14C16 29 24 29 26 27H36M5 30C9 28 12 31 15 30" fill="none" stroke="#6fae93" strokeWidth="1.2" />
    <rect x="15.5" y="27.5" width="9" height="7" fill="#c8483f" />
    <path d="M20 28V34M16 31H24" stroke="#fff" strokeWidth="1" />
  </Crest>
);

/* ---------- Inline glyphs of the info line ---------- */

const ClockGlyph = () => (
  <svg className="h-6 w-6 shrink-0" viewBox="0 0 24 24">
    <defs>
      <linearGradient id="clockRim" x1="0" y1="0" x2="0" y2="1">
        <stop offset="0" stopColor="#97a1b2" />
        <stop offset="1" stopColor="#57585b" />
      </linearGradient>
      <radialGradient id="clockFace" cx=".42" cy=".42" r=".6">
        <stop offset="0.45" stopColor="#fbfbfb" />
        <stop offset="1" stopColor="#c3c4c7" />
      </radialGradient>
    </defs>
    <circle cx="12" cy="12" r="11.6" fill="url(#clockRim)" />
    <circle cx="11.5" cy="11.7" r="10.3" fill="url(#clockFace)" />
    <path d="M12 4.5V12.3H17.5" fill="none" stroke="#9a9ca0" strokeWidth="1.4" />
  </svg>
);

const StadiumGlyph = () => (
  <svg className="h-6 w-6 shrink-0" viewBox="0 0 24 24">
    <path d="M0.5 11H23.5L22 19.5C20 23.2 4 23.2 2 19.5Z" fill="#a3a5a8" />
    <path d="M4 16V20M7.6 17.5V21.5M11 18V22M14.2 18V22M17.5 17.5V21.5M20.6 16V20" stroke="#505255" strokeWidth="1.7" />
    <path d="M0.8 11C1.5 6 5 4 12 4S22.5 6 23.2 11C22.5 14.5 17 15.8 12 15.8S1.5 14.5 0.8 11Z" fill="#df6257" />
    <path d="M3 9L7 5.5L9 9L6 13ZM21 9L17 5.5L15 9L18 13Z" fill="#f0897c" />
    <path d="M5 14L9.5 8.5H14.5L19 14C15 15.8 9 15.8 5 14Z" fill="#86c95a" />
    <path d="M10 12.5L12 10L14 12.5Z" fill="#e9806f" />
    <path d="M8 1.5H16V4.5H8Z" fill="#6a7058" />
    <path d="M2 5V2.5H6M22 5V2.5H18" fill="none" stroke="#94b4d8" strokeWidth="1.5" />
  </svg>
);

/* ---------- Matches ---------- */

type Match = {
  home: string;
  homeCrest: ReactNode;
  homeTracking: string;
  away: string;
  awayCrest: ReactNode;
  score: string;
  time?: string;
  venue: string;
};

const leagues: { name: string; matches: Match[] }[] = [
  {
    name: "Landesliga - Karnten",
    matches: [
      { home: "Ferlach", homeCrest: <Ferlach />, homeTracking: "tracking-[-0.2px]", score: "- - -", away: "Wolfsberger AC III", awayCrest: <NoImage />, time: "08:00", venue: "Sportplatz Ferlach" },
      { home: "Köttmannsdorf", homeCrest: <Kottmannsdorf />, homeTracking: "tracking-[-0.05px]", score: "2 - 2", away: "SAK Klagenfurt", awayCrest: <Sak />, time: "21:00", venue: "Sportplatz ASKÖ Köttmannsdorf" },
    ],
  },
  {
    name: "Serie C - Girone C",
    matches: [
      { home: "Taranto", homeCrest: <Taranto />, homeTracking: "tracking-[-0.4px]", score: "- - -", away: "Juventus U23", awayCrest: <Juventus />, time: "08:00", venue: "Stadio Giovanni Paolo II" },
      { home: "Potenza", homeCrest: <Potenza />, homeTracking: "tracking-[-0.3px]", score: "1 - 1", away: "Casertana", awayCrest: <Casertana />, venue: "Stadio Comunale Alfredo Viviani" },
      { home: "Trapani 1905", homeCrest: <Trapani />, homeTracking: "tracking-[-0.12px]", score: "2 - 0", away: "Team Altamura", awayCrest: <Altamura />, venue: "Stadio Polisportivo Provinciale" },
      { home: "Messina", homeCrest: <Messina />, homeTracking: "tracking-[-0.45px]", score: "- - -", away: "Turris", awayCrest: <Turris />, time: "23:30", venue: "Stadio Comunale Franco Scoglio" },
      { home: "Audace Cerignola", homeCrest: <Audace />, homeTracking: "tracking-[-0.48px]", score: "- - -", away: "Benevento", awayCrest: <Benevento />, time: "01:30", venue: "Campo Comunale Domenico Monterisi" },
      { home: "Avellino", homeCrest: <Avellino />, homeTracking: "tracking-[-0.4px]", score: "- - -", away: "SS Monopoli", awayCrest: <Monopoli />, time: "01:30", venue: "Stadio Partenio" },
    ],
  },
];

const scoreTracking: Record<string, string> = {
  "1 - 1": "tracking-[1.1px]",
  "- - -": "tracking-[0.5px]",
};

function MatchCard({ m }: { m: Match }) {
  return (
    <div className="flex h-[136px] shrink-0 items-center justify-between rounded-2xl bg-[#d2d5da] px-8 shadow-[0_2px_4px_rgba(0,0,0,0.08)]">
      <div className="flex flex-col gap-2">
        <div className="flex h-12 items-center whitespace-nowrap text-[31.2px] font-[440] leading-[46px] text-black">
          {m.homeCrest}
          <span className={"ml-4 pt-[2px] " + m.homeTracking}>{m.home}</span>
          <span
            className={
              "ml-8 mr-[32.5px] pt-[2px] text-[27.2px] font-bold text-[#1f2937] " + (scoreTracking[m.score] ?? "tracking-[0.35px]")
            }
          >
            {m.score}
          </span>
          {m.awayCrest}
          <span className="ml-4 pt-[2px] tracking-[-0.42px]">{m.away}</span>
        </div>
        <div className="flex h-8 items-center whitespace-nowrap text-[23.4px] leading-[30px] tracking-[0.22px] text-[#6b7280]">
          {m.time ? (
            <>
              <ClockGlyph />
              <span className="ml-[7px] pt-[2px] tracking-[0.4px]">{m.time}</span>
            </>
          ) : (
            <span className="pt-[2px] font-semibold tracking-[0.4px] text-[#dc622b]">LIVE</span>
          )}
          <span className="w-[26px] pt-[2px] text-center text-[15px]">•</span>
          <StadiumGlyph />
          <span className="ml-[6px] pt-[2px]">{m.venue}</span>
        </div>
      </div>
      <button
        className={
          "h-[72px] rounded-lg px-8 pt-[2px] text-[27.2px] font-semibold text-white " +
          (m.time ? "bg-[#4ea155] tracking-[0.25px]" : "bg-[#3662e3] tracking-[0.1px]")
        }
      >
        {m.time ? "Pre-Bet" : "Bet Now"}
      </button>
    </div>
  );
}

/* ---------- Page ---------- */

export default function App() {
  return (
    <div className="flex h-[1964px] w-[3024px] flex-col overflow-hidden bg-white font-['Inter',sans-serif]">
      <MenuBar />
      <TabStrip />
      <Toolbar />
      <div className="relative flex min-h-0 flex-1 flex-col overflow-hidden bg-[#fefefe]">
        <header className="grid h-40 shrink-0 grid-cols-3 items-center bg-[#fefefe] px-12 shadow-[0_2px_6px_rgba(0,0,0,0.1),0_2px_4px_-2px_rgba(0,0,0,0.1)]">
          <h1 className="pt-[2px] text-[46.8px] font-bold tracking-[-0.2px] text-black">SportBet</h1>
          <nav className="flex items-center justify-center gap-6">
            <BasketballIcon />
            <SoccerIcon />
            <FaFootballBall className="h-12 w-12 text-[#ca3a31]" />
          </nav>
          <div className="h-14 justify-self-end rounded-full bg-[#fdf8c9] px-6 pt-[9px] text-[27.3px] font-[440] leading-10 tracking-[-0.05px] text-[#7e5023] shadow-[0_2px_4px_rgba(0,0,0,0.08)]">
            Balance: $0
          </div>
        </header>
        <main className="mx-auto mt-16 flex w-[1728px] shrink-0 flex-col gap-12">
          <input
            className="h-[76px] rounded-xl border-2 border-[#d2d5da] bg-white px-8 text-[27.2px] placeholder:text-[#9ea3ae]"
            placeholder="Search team"
          />
          {leagues.map((l) => (
            <section key={l.name} className="flex flex-col">
              <h2 className="mb-4 border-b-2 border-[#e5e7eb] pb-2 text-[35px] font-bold leading-[56px] text-[#2540a8]">{l.name}</h2>
              <div className="flex flex-col gap-6">
                {l.matches.map((m) => (
                  <MatchCard key={m.home} m={m} />
                ))}
              </div>
            </section>
          ))}
        </main>
        <span className="absolute inset-y-0 left-0 w-5 bg-gradient-to-r from-black/5 to-transparent" />
      </div>
    </div>
  );
}
